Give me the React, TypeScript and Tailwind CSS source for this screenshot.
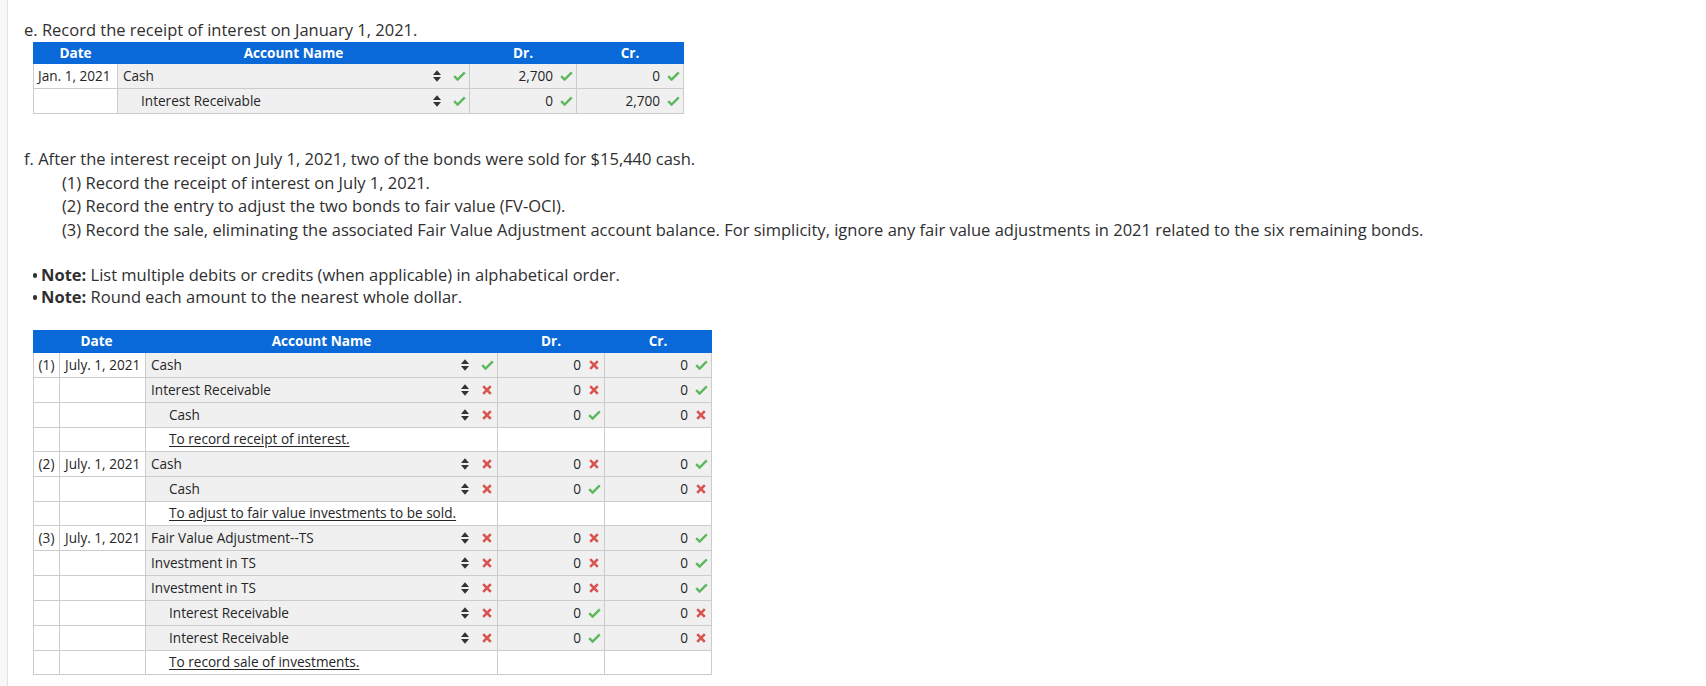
import React from "react";

type Mark = "c" | "x";

const Check = () => (
  <svg width="13" height="10" viewBox="0 0 13 10" className="block">
    <path d="M1.2 5.2 L4.6 8.6 L11.8 1.4" fill="none" stroke="#5cb85c" strokeWidth="2.4" strokeLinecap="butt" />
  </svg>
);

const Cross = () => (
  <svg width="10" height="10" viewBox="0 0 10 10" className="block">
    <path d="M1.2 1.2 L8.8 8.8 M8.8 1.2 L1.2 8.8" fill="none" stroke="#d9534f" strokeWidth="2.6" />
  </svg>
);

const MarkIcon = ({ m }: { m: Mark }) => (
  <span className="w-[14px] flex justify-center items-center">{m === "c" ? <Check /> : <Cross />}</span>
);

const Sort = () => (
  <svg width="8" height="12" viewBox="0 0 8 12" className="block">
    <path d="M4 0.3 L8 4.9 H0 Z" fill="#333333" />
    <path d="M0 7.1 H8 L4 11.7 Z" fill="#333333" />
  </svg>
);

type Row =
  | {
      kind: "data";
      n?: string;
      date?: string;
      acct: string;
      indent: boolean;
      am: Mark;
      dr: string;
      dm: Mark;
      cr: string;
      cm: Mark;
    }
  | { kind: "memo"; text: string };

const t1: Row[] = [
  { kind: "data", date: "Jan. 1, 2021", acct: "Cash", indent: false, am: "c", dr: "2,700", dm: "c", cr: "0", cm: "c" },
  { kind: "data", acct: "Interest Receivable", indent: true, am: "c", dr: "0", dm: "c", cr: "2,700", cm: "c" },
];

const t2: Row[] = [
  { kind: "data", n: "(1)", date: "July. 1, 2021", acct: "Cash", indent: false, am: "c", dr: "0", dm: "x", cr: "0", cm: "c" },
  { kind: "data", acct: "Interest Receivable", indent: false, am: "x", dr: "0", dm: "x", cr: "0", cm: "c" },
  { kind: "data", acct: "Cash", indent: true, am: "x", dr: "0", dm: "c", cr: "0", cm: "x" },
  { kind: "memo", text: "To record receipt of interest." },
  { kind: "data", n: "(2)", date: "July. 1, 2021", acct: "Cash", indent: false, am: "x", dr: "0", dm: "x", cr: "0", cm: "c" },
  { kind: "data", acct: "Cash", indent: true, am: "x", dr: "0", dm: "c", cr: "0", cm: "x" },
  { kind: "memo", text: "To adjust to fair value investments to be sold." },
  { kind: "data", n: "(3)", date: "July. 1, 2021", acct: "Fair Value Adjustment--TS", indent: false, am: "x", dr: "0", dm: "x", cr: "0", cm: "c" },
  { kind: "data", acct: "Investment in TS", indent: false, am: "x", dr: "0", dm: "x", cr: "0", cm: "c" },
  { kind: "data", acct: "Investment in TS", indent: false, am: "x", dr: "0", dm: "x", cr: "0", cm: "c" },
  { kind: "data", acct: "Interest Receivable", indent: true, am: "x", dr: "0", dm: "c", cr: "0", cm: "x" },
  { kind: "data", acct: "Interest Receivable", indent: true, am: "x", dr: "0", dm: "c", cr: "0", cm: "x" },
  { kind: "memo", text: "To record sale of investments." },
];

const cell = "border border-[#cccccc] p-0 align-middle";

function Journal({ rows, withNum }: { rows: Row[]; withNum: boolean }) {
  return (
    <table className="table-fixed border-collapse text-[13.6px] text-[#262626]">
      <colgroup>
        {withNum && <col className="w-[26px]" />}
        <col className={withNum ? "w-[86px]" : "w-[84px]"} />
        <col className="w-[352px]" />
        <col className="w-[107px]" />
        <col className="w-[107px]" />
      </colgroup>
      <thead>
        <tr className="h-[21px] bg-[#0a69d8] text-white font-bold">
          <th colSpan={withNum ? 2 : 1} className="border border-[#0a69d8] p-0 text-center font-bold">
            {withNum ? <span className="pl-[14px]">Date</span> : "Date"}
          </th>
          <th className="border border-[#0a69d8] p-0 text-center font-bold">Account Name</th>
          <th className="border border-[#0a69d8] p-0 text-center font-bold">Dr.</th>
          <th className="border border-[#0a69d8] p-0 text-center font-bold">Cr.</th>
        </tr>
      </thead>
      <tbody>
        {rows.map((r, i) =>
          r.kind === "memo" ? (
            <tr key={i} className="h-[24px]">
              {withNum && <td className={`${cell} bg-white`} />}
              <td className={`${cell} bg-white`} />
              <td className={`${cell} bg-white`}>
                <span className="pl-[23px] underline underline-offset-2">{r.text}</span>
              </td>
              <td className={`${cell} bg-white`} />
              <td className={`${cell} bg-white`} />
            </tr>
          ) : (
            <tr key={i} className="h-[25px]">
              {withNum && (
                <td className={`${cell} bg-white text-center whitespace-nowrap`}>{r.n ?? ""}</td>
              )}
              <td className={`${cell} bg-white whitespace-nowrap ${withNum ? "pl-[5px]" : "pl-[4px]"}`}>
                {r.date ?? ""}
              </td>
              <td className={`${cell} bg-[#f0f0f0]`}>
                <div className="flex items-center pr-[3px]">
                  <span className={`flex-1 whitespace-nowrap ${r.indent ? "pl-[23px]" : "pl-[5px]"}`}>{r.acct}</span>
                  <Sort />
                  <span className="w-[11px]" />
                  <MarkIcon m={r.am} />
                </div>
              </td>
              <td className={`${cell} bg-[#f0f0f0]`}>
                <div className="flex items-center justify-end gap-[6px] pr-[3px]">
                  <span>{r.dr}</span>
                  <MarkIcon m={r.dm} />
                </div>
              </td>
              <td className={`${cell} bg-[#f0f0f0]`}>
                <div className="flex items-center justify-end gap-[6px] pr-[3px]">
                  <span>{r.cr}</span>
                  <MarkIcon m={r.cm} />
                </div>
              </td>
            </tr>
          )
        )}
      </tbody>
    </table>
  );
}

export default function App() {
  return (
    <div className="flex min-h-[686px] bg-white" style={{ fontFamily: '"Open Sans", "Liberation Sans", sans-serif' }}>
      <div className="w-[8px] shrink-0 bg-[#f6f7f9] border-r border-[#e2e2e2]" />
      <div className="flex-1 pl-[16px] pt-[18px] text-[16.5px] text-[#2f2f2f]">
        <p className="leading-[24px]">e. Record the receipt of interest on January 1, 2021.</p>
        <div className="ml-[9px]">
          <Journal rows={t1} withNum={false} />
        </div>

        <div className="mt-[33px] leading-[23.5px]">
          <p>f. After the interest receipt on July 1, 2021, two of the bonds were sold for $15,440 cash.</p>
          <div className="pl-[38px]">
            <p>(1) Record the receipt of interest on July 1, 2021.</p>
            <p>(2) Record the entry to adjust the two bonds to fair value (FV-OCI).</p>
            <p>
              (3) Record the sale, eliminating the associated Fair Value Adjustment account balance. For simplicity,
              ignore any fair value adjustments in 2021 related to the six remaining bonds.
            </p>
          </div>
        </div>

        <ul className="mt-[23px] leading-[22px]">
          <li className="flex items-center">
            <span className="ml-[9px] mr-[4px] w-[4px] h-[5px] rounded-full bg-[#2f2f2f]" />
            <span>
              <b className="font-bold">Note:</b> List multiple debits or credits (when applicable) in alphabetical order.
            </span>
          </li>
          <li className="flex items-center">
            <span className="ml-[9px] mr-[4px] w-[4px] h-[5px] rounded-full bg-[#2f2f2f]" />
            <span>
              <b className="font-bold">Note:</b> Round each amount to the nearest whole dollar.
            </span>
          </li>
        </ul>

        <div className="ml-[9px] mt-[22px]">
          <Journal rows={t2} withNum={true} />
        </div>
      </div>
    </div>
  );
}
